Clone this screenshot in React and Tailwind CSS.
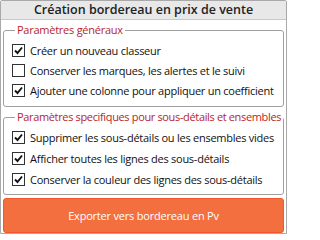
import React from "react";

function Check({ checked }) {
  return (
    <span className="w-[13px] h-[13px] border border-[#333] bg-white flex items-center justify-center shrink-0">
      {checked && (
        <svg width="9" height="9" viewBox="0 0 9 9">
          <path d="M1 4.5 L3.5 7 L8 1.5" fill="none" stroke="#111" strokeWidth="1.9" />
        </svg>
      )}
    </span>
  );
}

function Row({ checked, label, tall }) {
  return (
    <div className={tall ? "flex items-center gap-[5px] h-[21px]" : "flex items-center gap-[5px] h-[20px]"}>
      <Check checked={checked} />
      <span className="whitespace-nowrap">{label}</span>
    </div>
  );
}

export default function App() {
  const general = [
    [true, "Créer un nouveau classeur"],
    [false, "Conserver les marques, les alertes et le suivi"],
    [true, "Ajouter une colonne pour appliquer un coefficient"],
  ];
  const specific = [
    [true, "Supprimer les sous-détails ou les ensembles vides"],
    [true, "Afficher toutes les lignes des sous-détails"],
    [true, "Conserver la couleur des lignes des sous-détails"],
  ];
  return (
    <div className="w-[287px] h-[234px] bg-white font-['Open_Sans',sans-serif] text-[11px] tracking-[-0.25px] text-[#111] leading-none">
      <div className="h-full border border-[#a9a9a9] rounded-t-[2px] flex flex-col">
        <div className="h-[21px] bg-[#e8e8e8] border-b border-[#c8c8c8] flex items-center justify-center font-semibold text-[12.5px] tracking-normal text-[#222]">
          Création bordereau en prix de vente
        </div>
        <div className="flex flex-col px-[2px] pt-[3px]">
          <fieldset className="border border-[#a0a0a0] rounded-[3px] pl-[8px] pb-[6px] pt-[3px]">
            <legend className="ml-[3px] px-[2px] text-[#b8252b] leading-[14px] whitespace-nowrap">Paramètres généraux</legend>
            {general.map(([c, l]) => (
              <Row key={l} checked={c} label={l} />
            ))}
          </fieldset>
          <fieldset className="mt-[3px] border border-[#a0a0a0] rounded-[3px] pl-[8px] pb-[4px] pt-[3px]">
            <legend className="ml-[3px] px-[2px] text-[#b8252b] leading-[14px] whitespace-nowrap tracking-[-0.35px]">Paramètres specifiques pour sous-détails et ensembles</legend>
            {specific.map(([c, l]) => (
              <Row key={l} checked={c} label={l} tall />
            ))}
          </fieldset>
          <button className="mt-[3px] h-[35px] rounded-[3px] bg-[#f36f3f] border border-[#f4582a] text-white text-[11px] font-medium tracking-[-0.2px] flex items-center justify-center">
            Exporter vers bordereau en Pv
          </button>
        </div>
      </div>
    </div>
  );
}
